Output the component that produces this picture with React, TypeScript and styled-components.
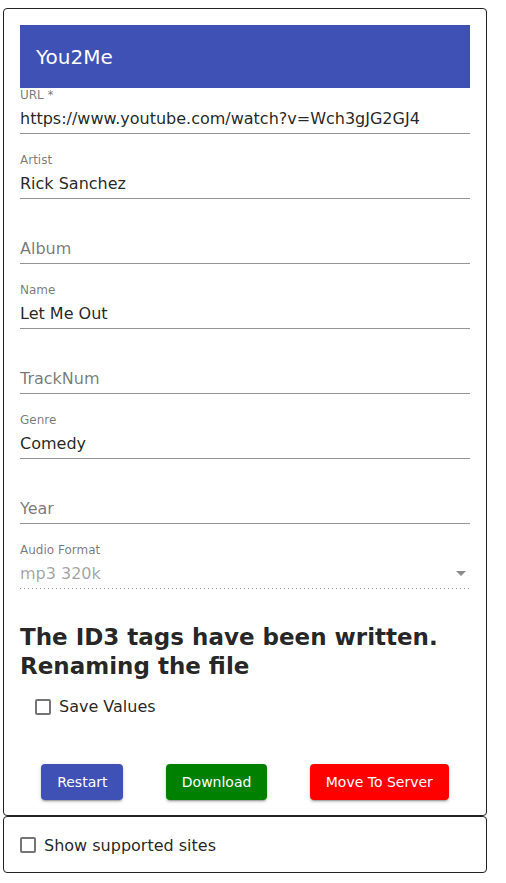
import styled, { createGlobalStyle } from "styled-components";

const GlobalStyle = createGlobalStyle`
    body {
        margin: 0;
        background: #ffffff;
        font-family: "DejaVu Sans", "Liberation Sans", sans-serif;
        color: rgba(0, 0, 0, 0.87);
    }
`;

interface FieldData {
    label: string;
    value: string;
    placeholder: string;
}

const fields: Array<FieldData> = [
    { label: "URL *", value: "https://www.youtube.com/watch?v=Wch3gJG2GJ4", placeholder: "" },
    { label: "Artist", value: "Rick Sanchez", placeholder: "" },
    { label: "", value: "", placeholder: "Album" },
    { label: "Name", value: "Let Me Out", placeholder: "" },
    { label: "", value: "", placeholder: "TrackNum" },
    { label: "Genre", value: "Comedy", placeholder: "" },
    { label: "", value: "", placeholder: "Year" },
];

export default function App() {
    return (
        <Page>
            <GlobalStyle />
            <Card>
                <AppBar>
                    <AppTitle>You2Me</AppTitle>
                </AppBar>
                <Form>
                    {fields.map(function (field: FieldData, i: number) {
                        return (
                            <Field key={i}>
                                <FieldLabel>{field.label}</FieldLabel>
                                <FieldInput readOnly defaultValue={field.value} placeholder={field.placeholder} />
                            </Field>
                        );
                    })}
                    <Field>
                        <FieldLabel>Audio Format</FieldLabel>
                        <SelectBox>
                            <SelectValue>mp3 320k</SelectValue>
                            <Arrow />
                        </SelectBox>
                    </Field>
                </Form>
                <Heading>The ID3 tags have been written. Renaming the file</Heading>
                <CheckRow $indent={15}>
                    <Box />
                    <CheckText>Save Values</CheckText>
                </CheckRow>
                <ButtonRow>
                    <ActionButton $bg="#3f51b5">Restart</ActionButton>
                    <ActionButton $bg="#008000">Download</ActionButton>
                    <ActionButton $bg="#ff0000">Move To Server</ActionButton>
                </ButtonRow>
            </Card>
            <SitesCard>
                <CheckRow $indent={0}>
                    <Box />
                    <CheckText>Show supported sites</CheckText>
                </CheckRow>
            </SitesCard>
        </Page>
    );
}

const Page = styled.div`
    width: 484px;
    padding: 8px 0 8px 3px;
`;
const Card = styled.div`
    box-sizing: border-box;
    width: 484px;
    border: 1px solid #222;
    border-radius: 4px;
    padding: 16px 16px 15px;
`;
const AppBar = styled.div`
    height: 63px;
    display: flex;
    align-items: center;
    padding-left: 16px;
    background: #3f51b5;
`;
const AppTitle = styled.span`
    color: #ffffff;
    font-size: 20px;
`;
const Form = styled.div`
    display: flex;
    flex-direction: column;
    gap: 19px;
`;
const Field = styled.div`
    display: flex;
    flex-direction: column;
`;
const FieldLabel = styled.label`
    height: 14px;
    font-size: 12px;
    line-height: 14px;
    color: rgba(0, 0, 0, 0.54);
`;
const FieldInput = styled.input`
    box-sizing: content-box;
    height: 19px;
    padding: 7px 0 5px;
    margin: 0;
    border: none;
    border-bottom: 1px solid rgba(0, 0, 0, 0.42);
    outline: none;
    font-family: inherit;
    font-size: 16px;
    line-height: 19px;
    color: rgba(0, 0, 0, 0.87);
    background: transparent;

    &::placeholder {
        color: rgba(0, 0, 0, 0.54);
        opacity: 1;
    }
`;
const SelectBox = styled.div`
    display: flex;
    align-items: center;
    justify-content: space-between;
    padding: 7px 0 6px;
    background-image: linear-gradient(to right, rgba(0, 0, 0, 0.42) 25%, transparent 0%);
    background-size: 4px 1px;
    background-repeat: repeat-x;
    background-position: left bottom;
`;
const SelectValue = styled.span`
    font-size: 16px;
    line-height: 19px;
    color: rgba(0, 0, 0, 0.38);
`;
const Arrow = styled.span`
    width: 0;
    height: 0;
    margin-right: 4px;
    border-left: 5px solid transparent;
    border-right: 5px solid transparent;
    border-top: 5px solid rgba(0, 0, 0, 0.45);
`;
const Heading = styled.h2`
    margin: 34px 0 0;
    font-size: 23px;
    font-weight: 700;
    line-height: 29px;
    color: rgba(0, 0, 0, 0.87);
`;
const CheckRow = styled.div<{ $indent: number }>`
    display: flex;
    align-items: center;
    gap: 8px;
    height: 24px;
    padding-left: ${(p) => p.$indent}px;
    margin-top: ${(p) => (p.$indent ? "13.5px" : "0")};
`;
const Box = styled.span`
    box-sizing: border-box;
    width: 16px;
    height: 16px;
    border: 2px solid #757575;
    border-radius: 2px;
`;
const CheckText = styled.span`
    font-size: 16px;
    line-height: 19px;
    color: rgba(0, 0, 0, 0.87);
`;
const ButtonRow = styled.div`
    display: flex;
    justify-content: space-around;
    margin-top: 45.5px;
`;
const ActionButton = styled.button<{ $bg: string }>`
    height: 36px;
    min-width: 64px;
    padding: 0 16px;
    border: none;
    border-radius: 4px;
    background: ${(p) => p.$bg};
    color: #ffffff;
    font-family: inherit;
    font-size: 14px;
    box-shadow: 0 3px 1px -2px rgba(0, 0, 0, 0.2), 0 2px 2px 0 rgba(0, 0, 0, 0.14),
        0 1px 5px 0 rgba(0, 0, 0, 0.12);
`;
const SitesCard = styled.div`
    box-sizing: border-box;
    width: 484px;
    border: 1px solid #222;
    border-radius: 4px;
    padding: 16px 16px 15px;
`;
